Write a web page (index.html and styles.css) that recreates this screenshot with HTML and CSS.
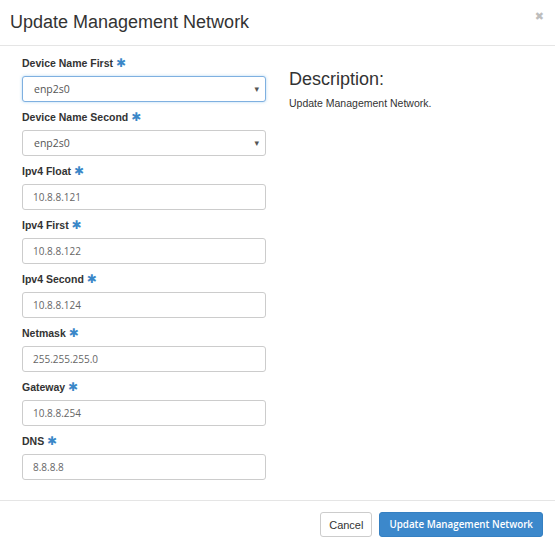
FILE: index.html
```html
<!DOCTYPE html>
<html>
<head>
<meta charset="utf-8">
<link rel="stylesheet" href="styles.css">
</head>
<body>
<div class="modal">
  <div class="modal-header">
    <h3 class="modal-title">Update Management Network</h3>
    <span class="close">&#x2716;</span>
  </div>
  <div class="modal-body">
    <form class="form-col">
      <div class="group">
        <label class="label">Device Name First <span class="req">&#x2731;</span></label>
        <div class="select focus"><span>enp2s0</span><span class="caret">&#x25BE;</span></div>
      </div>
      <div class="group">
        <label class="label">Device Name Second <span class="req">&#x2731;</span></label>
        <div class="select"><span>enp2s0</span><span class="caret">&#x25BE;</span></div>
      </div>
      <div class="group">
        <label class="label">Ipv4 Float <span class="req">&#x2731;</span></label>
        <input class="input" type="text" value="10.8.8.121">
      </div>
      <div class="group">
        <label class="label">Ipv4 First <span class="req">&#x2731;</span></label>
        <input class="input" type="text" value="10.8.8.122">
      </div>
      <div class="group">
        <label class="label">Ipv4 Second <span class="req">&#x2731;</span></label>
        <input class="input" type="text" value="10.8.8.124">
      </div>
      <div class="group">
        <label class="label">Netmask <span class="req">&#x2731;</span></label>
        <input class="input" type="text" value="255.255.255.0">
      </div>
      <div class="group">
        <label class="label">Gateway <span class="req">&#x2731;</span></label>
        <input class="input" type="text" value="10.8.8.254">
      </div>
      <div class="group">
        <label class="label">DNS <span class="req">&#x2731;</span></label>
        <input class="input" type="text" value="8.8.8.8">
      </div>
    </form>
    <div class="desc-col">
      <h3 class="desc-title">Description:</h3>
      <p class="desc-text">Update Management Network.</p>
    </div>
  </div>
  <div class="modal-footer">
    <button class="btn btn-default" type="button">Cancel</button>
    <button class="btn btn-primary" type="button">Update Management Network</button>
  </div>
</div>
</body>
</html>
```
FILE: styles.css
```css
html, body {
  margin: 0;
  padding: 0;
  background: #fff;
}
body {
  font-family: "Liberation Sans", Arial, sans-serif;
  color: #333;
}
.modal {
  width: 555px;
  height: 545px;
  display: flex;
  flex-direction: column;
}
.modal-header {
  display: flex;
  justify-content: space-between;
  align-items: center;
  height: 46px;
  box-sizing: border-box;
  padding: 0 10px;
  border-bottom: 1px solid #e5e5e5;
}
.modal-title {
  margin: 0;
  font-size: 18px;
  font-weight: normal;
  color: #333;
}
.close {
  font-family: "DejaVu Sans", sans-serif;
  font-size: 11px;
  color: #bdbdbd;
  margin-right: 1px;
  margin-top: -13px;
}
.modal-body {
  display: flex;
  padding: 10px 22px 0 22px;
  height: 454px;
  box-sizing: border-box;
}
.form-col {
  width: 244px;
  display: flex;
  flex-direction: column;
  margin: 0;
}
.group {
  display: flex;
  flex-direction: column;
  margin-bottom: 8px;
}
.label {
  font-size: 10.5px;
  font-weight: bold;
  line-height: 15px;
  height: 15px;
  margin-bottom: 5px;
  color: #333;
}
.req {
  font-family: "DejaVu Sans", sans-serif;
  font-weight: bold;
  color: #3a87c8;
  font-size: 12px;
  line-height: 10px;
}
.select, .input {
  box-sizing: border-box;
  height: 26px;
  width: 244px;
  border: 1px solid #ccc;
  border-radius: 3px;
  padding: 0 10px;
  font-family: "Open Sans", sans-serif;
  font-size: 10px;
  color: #666;
  background: #fff;
}
.input {
  outline: none;
  margin: 0;
}
.select {
  display: flex;
  align-items: center;
  justify-content: space-between;
  padding: 0 6px 0 11px;
  font-size: 10.5px;
  color: #555;
}
.select.focus {
  border-color: #7fb0e0;
  box-shadow: 0 0 3px rgba(102, 175, 233, 0.5);
}
.caret {
  font-family: "DejaVu Sans", sans-serif;
  font-size: 9px;
  color: #555;
}
.desc-col {
  margin-left: 23px;
  padding-top: 13px;
}
.desc-title {
  margin: 0;
  font-size: 18px;
  font-weight: normal;
  color: #333;
  line-height: 20px;
}
.desc-text {
  margin: 8px 0 0 0;
  font-size: 10.5px;
  color: #333;
}
.modal-footer {
  display: flex;
  justify-content: flex-end;
  align-items: flex-start;
  gap: 7px;
  border-top: 1px solid #e5e5e5;
  padding: 11px 12px 0 0;
  flex: 1;
}
.btn {
  height: 25px;
  box-sizing: border-box;
  border-radius: 3px;
  font-family: "Open Sans", sans-serif;
  font-size: 11px;
  padding: 0 9px;
  cursor: pointer;
}
.btn-default {
  background: #fff;
  border: 1px solid #ccc;
  color: #333;
  font-family: "Liberation Sans", Arial, sans-serif;
  padding: 0 8px;
}
.btn-primary {
  background: #3c88cb;
  border: 1px solid #3580c2;
  color: #fff;
  font-weight: 600;
  font-size: 9.8px;
  padding: 0 9px;
}
```
